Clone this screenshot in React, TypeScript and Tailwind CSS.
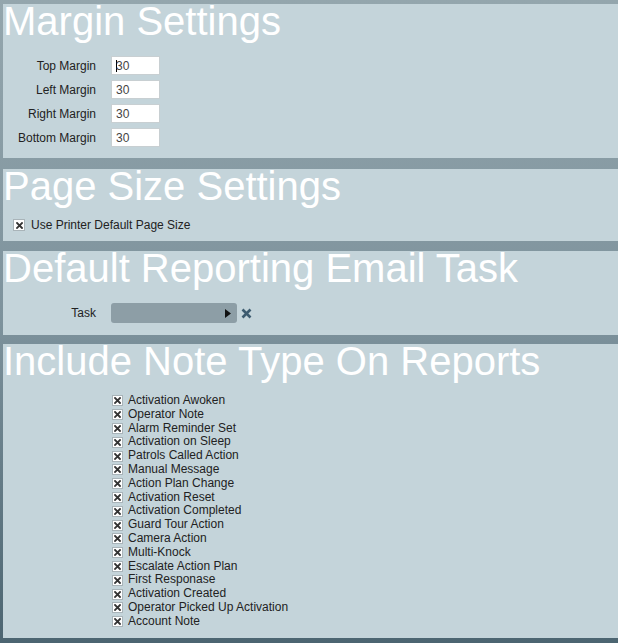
import React from 'react';

const noteTypes = [
  'Activation Awoken',
  'Operator Note',
  'Alarm Reminder Set',
  'Activation on Sleep',
  'Patrols Called Action',
  'Manual Message',
  'Action Plan Change',
  'Activation Reset',
  'Activation Completed',
  'Guard Tour Action',
  'Camera Action',
  'Multi-Knock',
  'Escalate Action Plan',
  'First Responase',
  'Activation Created',
  'Operator Picked Up Activation',
  'Account Note',
];

const margins = ['Top Margin', 'Left Margin', 'Right Margin', 'Bottom Margin'];

function CheckBox({ size = 'md' }: { size?: 'sm' | 'md' }) {
  const box = size === 'sm' ? 'w-[11px] h-[11px]' : 'w-[12px] h-[12px]';
  return (
    <span className={`${box} shrink-0 bg-white border border-[#a9b4b9] flex items-center justify-center`}>
      <svg width="7" height="7" viewBox="0 0 7 7">
        <path d="M1 1 L6 6 M6 1 L1 6" stroke="#333" strokeWidth="1.8" strokeLinecap="square" />
      </svg>
    </span>
  );
}

function Panel({ title, className, children }: { title: string; className: string; children: React.ReactNode }) {
  return (
    <div className={`bg-[#c4d4da] ${className}`}>
      <h1 className="text-[40px] leading-[34px] text-white whitespace-nowrap">{title}</h1>
      {children}
    </div>
  );
}

export default function App() {
  return (
    <div
      className="h-[643px] w-[618px] overflow-hidden bg-gradient-to-b from-[#94a6ad] via-[#7d929c] to-[#4c6571] pl-[3px] pt-[4px] flex flex-col text-[12px] text-[#222]"
      style={{ fontFamily: '"Liberation Sans", Arial, sans-serif' }}
    >
      <Panel title="Margin Settings" className="h-[154px]">
        <div className="mt-[18px] flex flex-col gap-[5px]">
          {margins.map((m, i) => (
            <div key={m} className="flex items-center h-[19px]">
              <span className="w-[93px] text-right">{m}</span>
              <div className="ml-[15px] w-[49px] h-[19px] bg-white border border-[#c8cfd2] flex items-center pl-[4px] text-[#444]">
                {i === 0 && <span className="w-px h-[12px] bg-black -mr-px" />}
                30
              </div>
            </div>
          ))}
        </div>
      </Panel>

      <Panel title="Page Size Settings" className="mt-[11px] h-[72px]">
        <div className="mt-[13px] ml-[10px] flex items-center gap-[6px]">
          <CheckBox />
          <span>Use Printer Default Page Size</span>
        </div>
      </Panel>

      <Panel title="Default Reporting Email Task" className="mt-[10px] h-[84px]">
        <div className="mt-[18px] flex items-center">
          <span className="w-[93px] text-right">Task</span>
          <div className="ml-[15px] w-[126px] h-[20px] rounded-[3px] bg-[#8d9ea6] flex items-center justify-end pr-[6px]">
            <svg width="6" height="9" viewBox="0 0 6 9">
              <path d="M0 0 L6 4.5 L0 9 Z" fill="#111" />
            </svg>
          </div>
          <svg className="ml-[4px]" width="11" height="11" viewBox="0 0 11 11">
            <path d="M1.5 1.5 L9.5 9.5 M9.5 1.5 L1.5 9.5" stroke="#3d5b6f" strokeWidth="2.6" />
          </svg>
        </div>
      </Panel>

      <Panel title="Include Note Type On Reports" className="mt-[9px] h-[294px]">
        <div className="mt-[16px] ml-[109px] flex flex-col">
          {noteTypes.map((n) => (
            <div key={n} className="h-[13.8px] flex items-center gap-[5px] leading-[13.8px]">
              <CheckBox size="sm" />
              <span>{n}</span>
            </div>
          ))}
        </div>
      </Panel>
    </div>
  );
}
